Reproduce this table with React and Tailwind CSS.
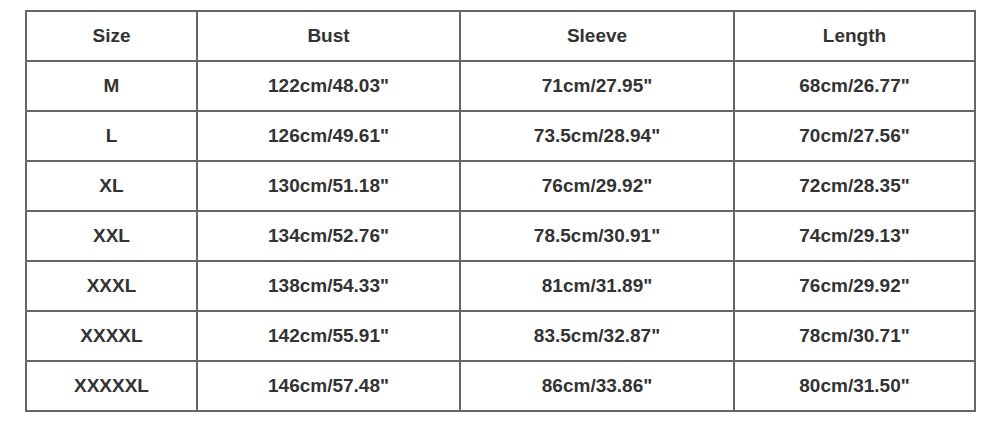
import React from 'react';

const rows = [
  ['M', '122cm/48.03"', '71cm/27.95"', '68cm/26.77"'],
  ['L', '126cm/49.61"', '73.5cm/28.94"', '70cm/27.56"'],
  ['XL', '130cm/51.18"', '76cm/29.92"', '72cm/28.35"'],
  ['XXL', '134cm/52.76"', '78.5cm/30.91"', '74cm/29.13"'],
  ['XXXL', '138cm/54.33"', '81cm/31.89"', '76cm/29.92"'],
  ['XXXXL', '142cm/55.91"', '83.5cm/32.87"', '78cm/30.71"'],
  ['XXXXXL', '146cm/57.48"', '86cm/33.86"', '80cm/31.50"'],
];

const App = () => {
  return (
    <div className="w-[1000px] h-[421px] bg-white pt-[10px] pl-[25px] font-['Liberation_Sans',Arial,sans-serif]">
      <table className="table-fixed border-collapse w-[949px] text-[19px] font-bold text-[#333]">
        <colgroup>
          <col className="w-[171px]" />
          <col className="w-[263px]" />
          <col className="w-[274px]" />
          <col className="w-[241px]" />
        </colgroup>
        <thead>
          <tr className="h-[50px]">
            {['Size', 'Bust', 'Sleeve', 'Length'].map((h) => (
              <th key={h} className="border-2 border-[#666] text-center font-bold p-0">{h}</th>
            ))}
          </tr>
        </thead>
        <tbody>
          {rows.map((r) => (
            <tr key={r[0]} className="h-[50px]">
              {r.map((c, i) => (
                <td key={i} className="border-2 border-[#666] text-center p-0">{c}</td>
              ))}
            </tr>
          ))}
        </tbody>
      </table>
    </div>
  );
};

export default App;
